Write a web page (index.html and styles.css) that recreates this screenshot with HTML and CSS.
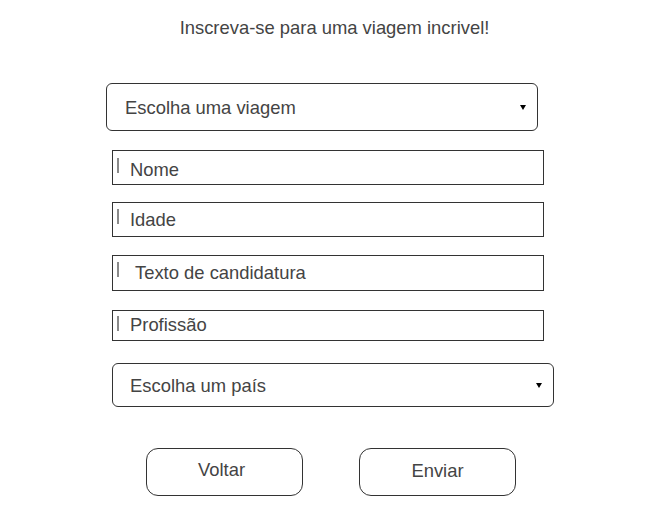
FILE: index.html
```html
<!DOCTYPE html>
<html lang="pt">
<head>
<meta charset="utf-8">
<title>Inscrição</title>
<link rel="stylesheet" href="styles.css">
</head>
<body>
<div class="page">
  <h1 class="title">Inscreva-se para uma viagem incrivel!</h1>
  <form class="form">
    <div class="select select-trip">
      <span class="select-label">Escolha uma viagem</span>
      <span class="arrow"></span>
    </div>
    <div class="field field-name"><span class="caret"></span><span class="ph">Nome</span></div>
    <div class="field field-age"><span class="caret"></span><span class="ph">Idade</span></div>
    <div class="field field-text"><span class="caret"></span><span class="ph ph-wide">Texto de candidatura</span></div>
    <div class="field field-job"><span class="caret"></span><span class="ph">Profissão</span></div>
    <div class="select select-country">
      <span class="select-label">Escolha um país</span>
      <span class="arrow"></span>
    </div>
    <div class="actions">
      <button type="button" class="btn btn-back">Voltar</button>
      <button type="button" class="btn">Enviar</button>
    </div>
  </form>
</div>
</body>
</html>
```
FILE: styles.css
```css
* { box-sizing: border-box; }
html, body { margin: 0; padding: 0; background: #fff; }
body {
  font-family: "Liberation Sans", Arial, sans-serif;
  font-size: 18.4px;
  color: #444;
}
.page { padding-top: 17px; }
.title {
  margin: 0;
  padding-left: 20px;
  font-size: 18.4px;
  font-weight: normal;
  line-height: 21px;
  text-align: center;
  color: #444;
}
.form {
  display: flex;
  flex-direction: column;
  align-items: flex-start;
}
.select {
  display: flex;
  align-items: center;
  justify-content: space-between;
  border: 1px solid #333;
  border-radius: 6px;
  padding: 0 11px 0 17px;
  line-height: 21px;
}
.select-trip {
  margin: 45px 0 0 106px;
  width: 432px;
  height: 48px;
  padding-left: 18px;
}
.select-country {
  margin: 22px 0 0 112px;
  width: 442px;
  height: 44px;
  padding-left: 17px;
}
.arrow {
  width: 0;
  height: 0;
  border-left: 3.5px solid transparent;
  border-right: 3.5px solid transparent;
  border-top: 5.5px solid #000;
}
.field {
  display: flex;
  align-items: flex-start;
  margin-left: 112px;
  width: 432px;
  border: 1px solid #333;
  padding: 6px 0 0 4px;
  line-height: 21px;
}
.caret {
  display: block;
  width: 2px;
  height: 15px;
  background: #8a8a8a;
}
.ph { margin-left: 11px; }
.ph-wide { margin-left: 16px; }
.field-name { margin-top: 19px; height: 35px; padding-top: 7px; }
.field-name .ph { margin-top: 1px; }
.field-age { margin-top: 17px; height: 35px; }
.field-text { margin-top: 18px; height: 36px; }
.field-job { margin-top: 19px; height: 31px; padding-top: 5px; }
.field-job .ph { margin-top: -2px; }
.actions {
  display: flex;
  gap: 56px;
  margin: 41px 0 0 146px;
}
.btn {
  width: 157px;
  height: 48px;
  border: 1px solid #333;
  border-radius: 12px;
  background: #fff;
  font-family: "Liberation Sans", Arial, sans-serif;
  font-size: 18.4px;
  color: #444;
  padding: 0 0 2px;
}
.btn-back { padding: 0 6px 4px 0; }
```
